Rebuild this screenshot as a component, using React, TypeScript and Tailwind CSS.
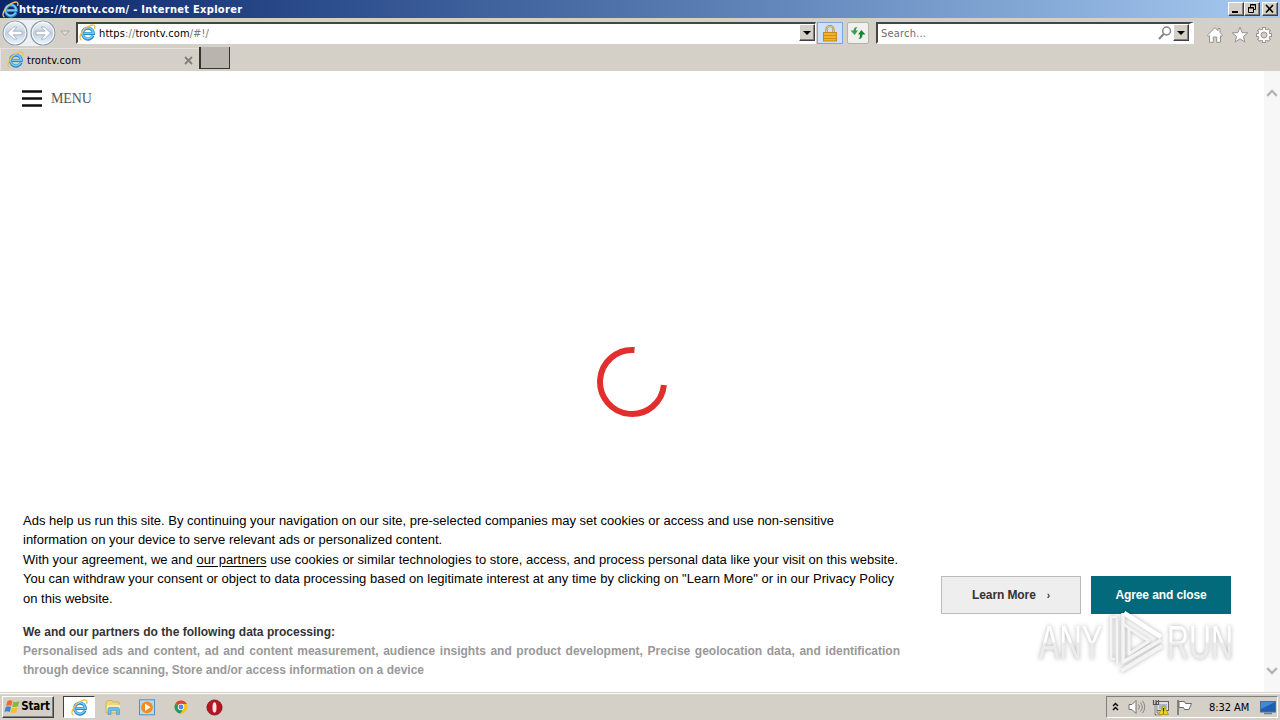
import type { ReactNode } from "react";

const IeIcon = ({ size = 16 }: { size?: number }) => (
  <svg width={size} height={size} viewBox="0 0 16 16" className="shrink-0">
    <path d="M13.200 10.800A5.100 5.100 0 1 1 13.500 8.900H4.400" fill="none" stroke="#2c87cc" strokeWidth="2.900" />
    <path d="M13 10.600A5.100 5.100 0 1 1 13.400 8.700H4.600" fill="none" stroke="#6fcbf5" strokeWidth="1.500" />
    <path d="M2.400 15.200C-.6 14.500 1.200 8.500 5.500 4.700C9.500 1.200 14.500 -.3 15 2.200C15.100 3 14.900 3.800 14.500 4.600" fill="none" stroke="#efc04a" strokeWidth="1.300" />
  </svg>
);

const RoundArrow = ({ flip = false }: { flip?: boolean }) => (
  <svg width="26" height="26" viewBox="0 0 26 26" className={flip ? "shrink-0 -scale-x-100" : "shrink-0"}>
    <defs>
      <linearGradient id="orb" x1="0" y1="0" x2="0" y2="1">
        <stop offset="0" stopColor="#f3f5f8" />
        <stop offset="0.5" stopColor="#c3d0df" />
        <stop offset="1" stopColor="#eef8ff" />
      </linearGradient>
    </defs>
    <circle cx="13" cy="13" r="12" fill="url(#orb)" stroke="#8b98a8" strokeWidth="1.200" />
    <circle cx="13" cy="13" r="10.800" fill="none" stroke="#f6fafe" strokeWidth="1" />
    <path d="M5.500 13L11.500 7H15L11 11.200H20V14.800H11L15 19H11.500Z" fill="#fff" stroke="#a4b1c2" strokeWidth="0.900" />
  </svg>
);

const BevelButton = ({ className, children }: { className: string; children: ReactNode }) => (
  <div
    className={`flex shrink-0 items-center justify-center border border-t-white border-l-white border-r-[#404040] border-b-[#404040] bg-[#d4d0c8] shadow-[inset_-1px_-1px_0_#808080] ${className}`}
  >
    {children}
  </div>
);

const DropArrow = () => (
  <svg width="8" height="4" viewBox="0 0 8 4">
    <path d="M0 0H8L4 4Z" fill="#000" />
  </svg>
);

const TitleBar = () => (
  <div className="flex h-[18px] items-center bg-linear-to-r from-[#0a246a] to-[#a6caf0] pr-[2px] pl-[2px]">
    <IeIcon size={17} />
    <span className="text-[11px] leading-[17px] font-bold tracking-[0.300px] whitespace-nowrap text-white">
      https://trontv.com/ - Internet Explorer
    </span>
    <div className="ml-auto flex">
      <BevelButton className="h-[14px] w-4">
        <svg width="12" height="10" viewBox="0 0 12 10">
          <path d="M2 8H8" stroke="#000" strokeWidth="2" />
        </svg>
      </BevelButton>
      <BevelButton className="h-[14px] w-4">
        <svg width="12" height="10" viewBox="0 0 12 10" fill="none" stroke="#000">
          <path d="M4.500 3V.5H9.500V5.500H8M4 1H10M2.500 3.500H7.500V8.500H2.500ZM2 4H8" />
        </svg>
      </BevelButton>
      <BevelButton className="ml-[2px] h-[14px] w-4">
        <svg width="12" height="10" viewBox="0 0 12 10">
          <path d="M2 1L9 8.500M9 1L2 8.500" stroke="#000" strokeWidth="1.600" />
        </svg>
      </BevelButton>
    </div>
  </div>
);

const Toolbar = () => (
  <div className="flex h-[29px] items-start bg-[#d4d0c8] pt-1 pl-[2px]">
    <div className="-mt-[2px] flex gap-[2px] rounded-full bg-[#edf0f2]">
      <RoundArrow />
      <RoundArrow flip />
    </div>
    <svg width="10" height="7" viewBox="0 0 10 7" className="mt-2 ml-1 shrink-0">
      <path d="M.8 1H9.200L5 5.500Z" fill="#e4e1dd" stroke="#aaa59f" />
    </svg>
    <div className="ml-[6px] flex h-[22px] w-[740px] items-start border-t-2 border-r border-b-2 border-l-2 border-t-[#484540] border-r-white border-b-white border-l-[#484540] bg-white">
      <div className="ml-px">
        <IeIcon size={17} />
      </div>
      <span className="ml-[3px] text-[11px] leading-5 tracking-[0.110px] whitespace-nowrap text-black">
        https<span className="text-[#777]">://</span>trontv.com<span className="text-[#777]">/#!/</span>
      </span>
      <BevelButton className="ml-auto h-[17px] w-4">
        <DropArrow />
      </BevelButton>
    </div>
    <div className="ml-px flex h-[22px] w-[26px] shrink-0 items-center justify-center border border-[#79a7e3] bg-[#cfe0f8]">
      <svg width="14" height="17" viewBox="0 0 14 17">
        <path d="M3.500 8V4.500A3.500 3.500 0 0 1 10.500 4.500V8" fill="none" stroke="#a5894b" strokeWidth="2.200" />
        <path d="M3.500 8V4.500A3.500 3.500 0 0 1 10.500 4.500V8" fill="none" stroke="#f0dda0" strokeWidth="0.800" />
        <rect x="0.500" y="7.500" width="13" height="8.500" fill="#f2b322" stroke="#c08a20" />
        <path d="M1 10.500H13M1 13.500H13" stroke="#d08f16" />
      </svg>
    </div>
    <div className="ml-1 flex h-[22px] w-[22px] shrink-0 items-center justify-center rounded-[2px] border border-[#b5b1aa] bg-[#f0f1ef]">
      <svg width="16" height="14" viewBox="0 0 16 14" className="shrink-0">
        <path d="M7.500 1C5 .8 3.500 2.500 3.500 4.500H.5L4.700 9L8 4.500H6C6 3 6.300 2 7.500 1Z" fill="#36a34a" />
        <path d="M8.500 13C11 13.200 12.500 11.500 12.500 8.500H15.500L11.300 4L8 8.500H10C10 10.500 9.700 12 8.500 13Z" fill="#168530" />
      </svg>
    </div>
    <div className="ml-[7px] flex h-[22px] w-[318px] shrink-0 items-start border-t-2 border-r-[5px] border-b-2 border-l-2 border-t-[#484540] border-r-white border-b-white border-l-[#484540] bg-white">
      <span className="ml-[3px] text-[11px] leading-5 tracking-[0.200px] text-[#6d6d6d]">Search...</span>
      <svg width="14" height="14" viewBox="0 0 14 14" className="mt-[2px] mr-px ml-auto">
        <circle cx="8.600" cy="5" r="3.900" fill="none" stroke="#858585" strokeWidth="1.500" />
        <path d="M5.700 8L1 13" stroke="#858585" strokeWidth="2" />
      </svg>
      <BevelButton className="h-[17px] w-4">
        <DropArrow />
      </BevelButton>
    </div>
    <div className="mt-1 ml-3 flex items-center gap-[6.500px]">
      <svg width="18" height="18" viewBox="0 0 18 18">
        <path d="M1.500 9L9 1.700L12 4.600V2.500H14V6.600L16.500 9L15.400 10.400L14.500 9.700V16.300H10.700V11H7.300V16.300H3.500V9.700L2.600 10.400Z" fill="#fff" stroke="#96928d" />
      </svg>
      <svg width="18" height="18" viewBox="0 0 18 18">
        <path d="M9 1.200L11.100 6.600L16.800 6.900L12.400 10.500L13.900 16L9 12.900L4.100 16L5.600 10.500L1.200 6.900L6.900 6.600Z" fill="#fff" stroke="#96928d" />
      </svg>
      <svg width="18" height="18" viewBox="0 0 18 18">
        <g stroke="#96928d" strokeWidth="4">
          <path d="M9 1V17M1 9H17M3.300 3.300L14.700 14.700M14.700 3.300L3.300 14.700" />
        </g>
        <circle cx="9" cy="9" r="6" fill="#fff" stroke="#96928d" />
        <path d="M9 2V16M2 9H16M4 4L14 14M14 4L4 14" stroke="#fff" strokeWidth="2.200" />
        <circle cx="9" cy="9" r="3" fill="#d4d0c8" stroke="#96928d" />
      </svg>
    </div>
  </div>
);

const TabRow = () => (
  <div className="flex h-6 bg-[#d4d0c8] pt-px">
    <div className="flex h-[22px] w-[199px] items-center border-t border-l border-[#e6e3df] pr-[6px] pl-[6px]">
      <IeIcon size={17} />
      <span className="mt-[2px] ml-[3px] text-[11px] leading-none tracking-[0.070px] text-black">trontv.com</span>
      <svg width="9" height="9" viewBox="0 0 9 9" className="mt-px ml-auto">
        <path d="M1 1L8 8M8 1L1 8" stroke="#858079" strokeWidth="1.900" />
      </svg>
    </div>
    <div className="-mt-px h-[22px] w-[31px] border-r border-b border-l-2 border-[#35322f] bg-[#bab4ae]" />
  </div>
);

const noticeLines = [
  { text: "Ads help us run this site. By continuing your navigation on our site, pre-selected companies may set cookies or access and use non-sensitive", width: "w-[811px]" },
  { text: "information on your device to serve relevant ads or personalized content.", width: "w-[419px]" },
];

const ConsentText = () => (
  <div className="w-[878px] text-[13px] leading-[19.500px] whitespace-nowrap text-black">
    {noticeLines.map((line) => (
      <div key={line.text} className={`${line.width} [text-align-last:justify]`}>
        {line.text}
      </div>
    ))}
    <div className="w-[875px] [text-align-last:justify]">
      With your agreement, we and <span className="underline underline-offset-2">our partners</span> use cookies or similar technologies to store, access, and process personal data like your visit on this website.
    </div>
    <div className="w-[871px] [text-align-last:justify]">
      You can withdraw your consent or object to data processing based on legitimate interest at any time by clicking on "Learn More" or in our Privacy Policy
    </div>
    <div>on this website.</div>
    <div className="mt-[14.500px] text-[12px] leading-[19px] font-bold">
      <div className="w-[312px] text-[#333] [text-align-last:justify]">We and our partners do the following data processing:</div>
      <div className="w-[877px] text-[#999] [text-align-last:justify]">
        Personalised ads and content, ad and content measurement, audience insights and product development, Precise geolocation data, and identification
      </div>
      <div className="w-[401px] text-[#999] [text-align-last:justify]">
        through device scanning, Store and/or access information on a device
      </div>
    </div>
  </div>
);

const Watermark = () => (
  <svg
    width="230"
    height="76"
    viewBox="0 0 230 76"
    className="absolute top-[532px] left-[1030px] overflow-visible drop-shadow-[0_0_2px_rgba(0,0,0,0.300)]"
  >
    <defs>
      <linearGradient id="mark" x1="0" y1="0" x2="0" y2="1">
        <stop offset="0.500" stopColor="#ffffff" />
        <stop offset="0.510" stopColor="#ececec" />
      </linearGradient>
    </defs>
    <g fill="url(#mark)" fontFamily="'Liberation Sans', sans-serif" fontSize="49">
      <text transform="translate(9 56) scale(0.630 1)">ANY</text>
      <text transform="translate(137 56) scale(0.622 1)">RUN</text>
    </g>
    <g fill="none" stroke="#f4f4f4" strokeWidth="3.500" strokeLinejoin="round">
      <path d="M94 10L131 34" strokeWidth="5" stroke="#fff" />
      <path d="M93 10V59L131 37" />
      <path d="M99 25V51L119 38L93 21" strokeWidth="3" />
      <path d="M87 14H81V56H85M87 16V62" strokeWidth="2.500" />
      <path d="M91 68L132 43" strokeWidth="4" />
    </g>
  </svg>
);

const PageView = () => (
  <div className="relative flex h-[621px] bg-white font-['Liberation_Sans',Arial,sans-serif]">
    <div className="flex flex-1 flex-col">
      <div className="flex h-[54px] items-center pl-[22px]">
        <svg width="20" height="17" viewBox="0 0 20 17">
          <path d="M0 1.500H20M0 8.500H20M0 15.500H20" stroke="#111" strokeWidth="2.300" />
        </svg>
        <span className="ml-[9px] font-['Liberation_Serif',serif] text-[14px] tracking-[-0.100px] text-[#555]">MENU</span>
      </div>
      <div className="flex h-[315px] items-end justify-center pb-[22.500px]">
        <svg width="72" height="72" viewBox="0 0 72 72">
          <path d="M38.500 4.100A32 32 0 1 0 67.900 39" fill="none" stroke="#e32e2e" strokeWidth="6" />
        </svg>
      </div>
      <div className="flex pt-[70.500px] pl-[23px]">
        <ConsentText />
        <div className="mt-[65.500px] ml-10 flex h-[38px] gap-[10px] text-[12px] font-bold">
          <button className="flex w-[140px] items-center justify-center border border-[#bbb] bg-[#eee] tracking-[-0.100px] text-[#333]">
            Learn More<span className="ml-[11px] text-[10px]">›</span>
          </button>
          <button className="w-[140px] bg-[#036a7c] tracking-[-0.100px] text-white">Agree and close</button>
        </div>
      </div>
    </div>
    <div className="flex w-4 flex-col items-center justify-between bg-[#f7f7f7] pt-[18px] pb-[17px]">
      <svg width="12" height="8" viewBox="0 0 12 8">
        <path d="M1.200 6.800L6 2L10.800 6.800" fill="none" stroke="#b5b5b5" strokeWidth="2.400" />
      </svg>
      <svg width="12" height="8" viewBox="0 0 12 8">
        <path d="M1.200 1.200L6 6L10.800 1.200" fill="none" stroke="#b5b5b5" strokeWidth="2.400" />
      </svg>
    </div>
    <Watermark />
  </div>
);

const WindowsFlag = () => (
  <svg width="17" height="16" viewBox="0 0 17 16" className="shrink-0">
    <path d="M3.500 2C5.500 .8 7 1.200 8.500 2L7.300 7C5.500 6 4 6 2 6.900Z" fill="#ee6b2b" />
    <path d="M9.500 2.600C11.500 3.500 13.500 3.200 15.500 2L14 7.300C12 8.300 10 8.300 8.200 7.400Z" fill="#85b936" />
    <path d="M1.800 8C4 6.900 5.500 7.200 7 8L5.800 13C4 12 2.300 12.200.5 13Z" fill="#3d85cd" />
    <path d="M8 8.600C10 9.500 12 9.300 13.800 8.300L12.500 13.300C10.500 14.500 8.500 14.200 6.600 13.300Z" fill="#f8bf27" />
  </svg>
);

const Taskbar = () => (
  <div className="flex h-7 items-start bg-[#d4d0c8] pl-[2px] shadow-[inset_0_1px_0_#d4d0c8,inset_0_2px_0_#fff]">
    <BevelButton className="mt-1 h-[22px] w-[52px] pr-[2px]">
      <WindowsFlag />
      <span className="text-[11.500px] leading-none font-bold tracking-[-0.200px] text-black">Start</span>
    </BevelButton>
    <div className="mt-1 ml-[9px] flex h-[22px] w-8 items-center justify-center border border-t-[#404040] border-r-white border-b-white border-l-[#404040] bg-white">
      <IeIcon size={17} />
    </div>
    <div className="mt-[7px] ml-[10px] flex gap-[17px]">
      <svg width="17" height="17" viewBox="0 0 17 17">
        <path d="M1 3L3 1.500H7L8 3H14V14H1Z" fill="#eed779" stroke="#caa847" strokeWidth="0.700" />
        <path d="M2 6H15V12H2Z" fill="#f9edb2" />
        <path d="M3 15.500V10Q3 8.500 4.500 8.500H12.500Q14.500 8.500 14.500 10.500V15.500H11.500V11.500H6V15.500Z" fill="#69bce8" stroke="#4797c6" strokeWidth="0.600" />
      </svg>
      <svg width="17" height="17" viewBox="0 0 17 17">
        <rect x="0.500" y="0.800" width="15" height="15" fill="#b9d8f1" stroke="#4c91ca" />
        <circle cx="8" cy="8.300" r="5.900" fill="#f28c1c" />
        <path d="M6 4.500L11.700 8.300L6 12.100Z" fill="#fff" />
      </svg>
      <svg width="16" height="16" viewBox="0 0 16 16">
        <circle cx="8" cy="8" r="6.500" fill="#fbc116" />
        <path d="M8 8L2.400 4.700A6.500 6.500 0 0 1 13.800 5H8Z" fill="#dc4437" />
        <path d="M8 8L2.400 4.700A6.500 6.500 0 0 0 7.500 14.500L10.600 9.500Z" fill="#219d59" />
        <circle cx="8" cy="8" r="3.200" fill="#fff" />
        <circle cx="8" cy="8" r="2.400" fill="#4688ed" />
      </svg>
      <svg width="18" height="18" viewBox="0 0 18 18">
        <circle cx="8.500" cy="8.500" r="7.600" fill="#b51420" stroke="#760b12" strokeWidth="0.700" />
        <ellipse cx="8.500" cy="8.500" rx="2" ry="5.200" fill="#f7e4e4" />
      </svg>
    </div>
    <div className="mt-1 mr-[2px] ml-auto flex h-[22px] w-[172px] items-center border border-t-[#808080] border-r-white border-b-white border-l-[#808080]">
      <svg width="7" height="10" viewBox="0 0 7 10" className="ml-[5px]">
        <path d="M1 4L3.500 1.500L6 4M1 8L3.500 5.500L6 8" fill="none" stroke="#000" strokeWidth="1.400" />
      </svg>
      <svg width="18" height="16" viewBox="0 0 18 16" className="ml-[9px]">
        <path d="M1 5.500H4L8 1.500V14.500L4 10.500H1Z" fill="#fff" stroke="#77736e" />
        <path d="M10.500 5.500Q12.300 8 10.500 10.500M12.500 3.500Q16 8 12.500 12.500M14.500 1.800Q19 8 14.500 14.200" fill="none" stroke="#8b8782" />
      </svg>
      <svg width="18" height="17" viewBox="0 0 18 17" className="ml-[6px]">
        <rect x="4.500" y="2.500" width="12" height="9" fill="#dfe3e5" stroke="#65635f" />
        <path d="M7 5H15V10H7Z" fill="#a9b8c2" />
        <path d="M1.500 1V5.500H6.500V1M4 1V5" fill="none" stroke="#55534f" strokeWidth="1.200" />
        <path d="M4 6V15H9" fill="none" stroke="#65635f" strokeWidth="2.600" />
        <path d="M4 6V15H9" fill="none" stroke="#fff" strokeWidth="1" />
        <path d="M11.500 6.500L16.500 15.500H6.500Z" fill="#f8d51d" stroke="#9e850d" strokeWidth="0.700" />
        <path d="M11.500 9V12.500M11.500 13.500V14.500" stroke="#222" strokeWidth="1.200" />
      </svg>
      <svg width="17" height="17" viewBox="0 0 17 17" className="ml-[6px]">
        <path d="M2 1V16" stroke="#6d6a65" strokeWidth="1.500" />
        <path d="M3 2.500H8.500L9.500 4.500H15.500L13 10.500H8.500L7.500 8.500H3Z" fill="#fff" stroke="#6d6a65" />
      </svg>
      <span className="ml-4 text-[11px] leading-none tracking-[-0.050px] whitespace-nowrap text-black">8:32 AM</span>
      <svg width="16" height="15" viewBox="0 0 16 15" className="mr-px ml-auto shrink-0">
        <rect x="0.500" y="1.500" width="15" height="10.500" fill="#1e5fb4" stroke="#466fa0" />
        <path d="M1 2H15L1 9Z" fill="#4688d3" />
        <path d="M4 13.500H12" stroke="#6d7d8c" strokeWidth="1.500" />
      </svg>
    </div>
  </div>
);

export default function App() {
  return (
    <div className="flex h-[720px] w-[1280px] flex-col overflow-hidden bg-white font-['DejaVu_Sans_Condensed','DejaVu_Sans',sans-serif]">
      <TitleBar />
      <Toolbar />
      <TabRow />
      <PageView />
      <Taskbar />
    </div>
  );
}
